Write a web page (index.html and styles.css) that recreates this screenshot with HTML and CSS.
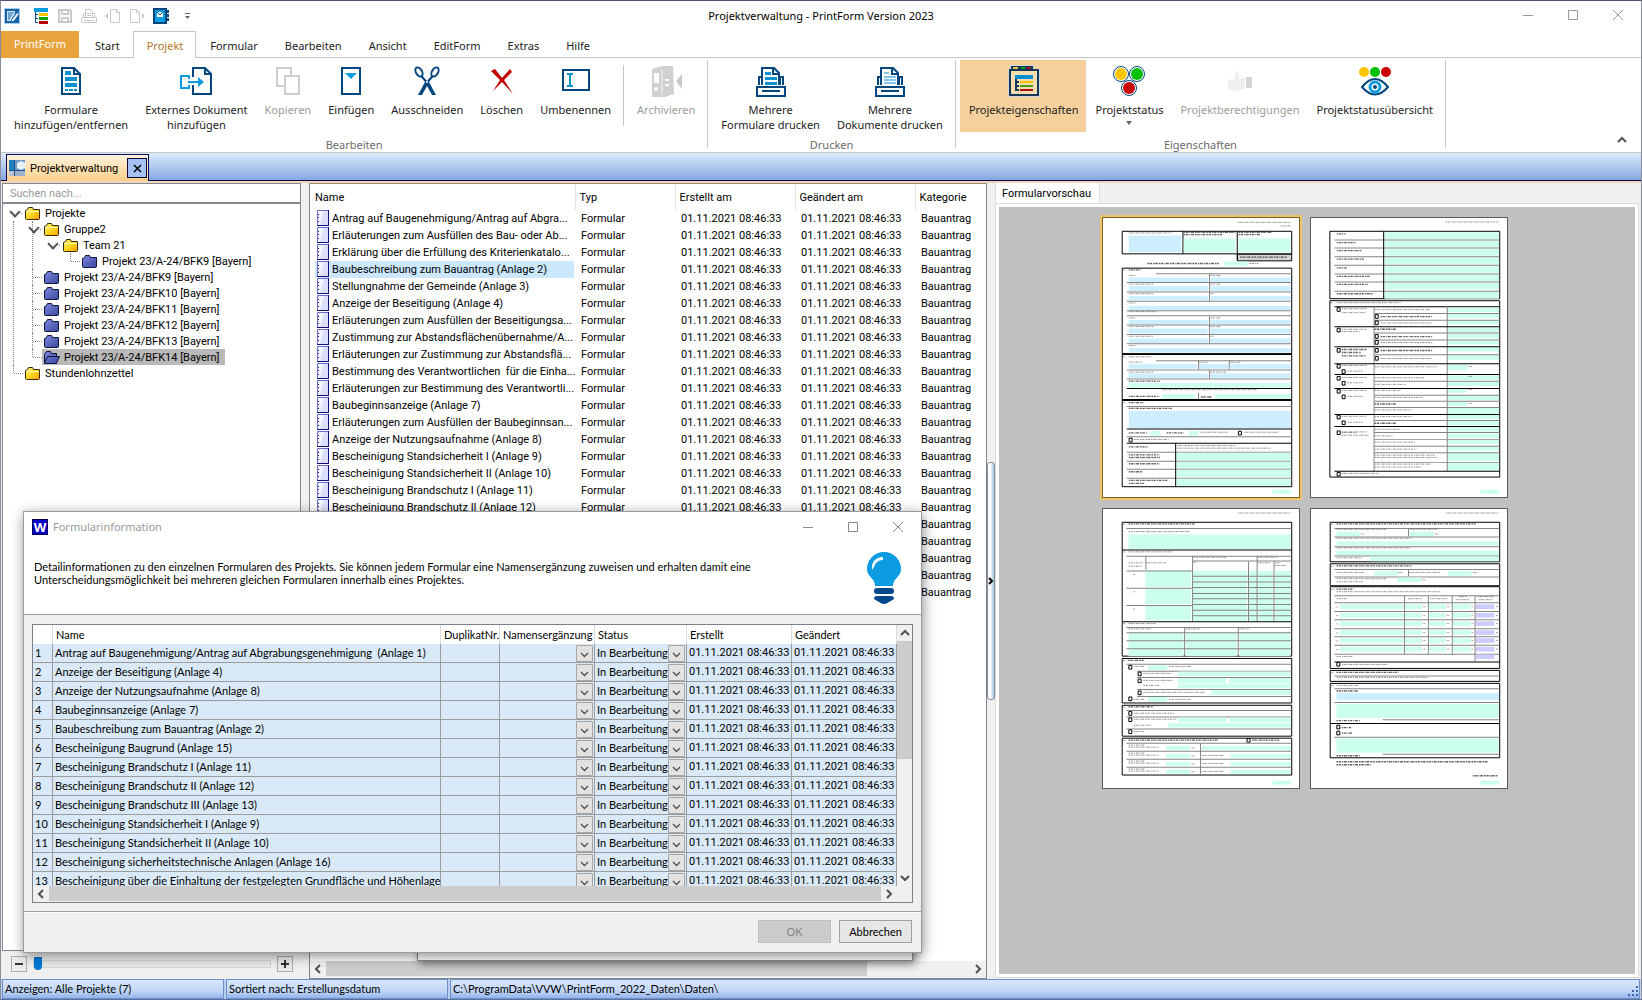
FILE: index.html
```html
<!DOCTYPE html>
<html lang="de">
<head>
<meta charset="utf-8">
<title>Projektverwaltung - PrintForm Version 2023</title>
<link rel="stylesheet" href="styles.css">
</head>
<body>
<div class="window">
  <header class="titlebar">
    <div class="quick">
      <button class="qbtn" aria-label="Bearbeiten"><svg width="16" height="16" viewBox="0 0 16 16"><rect width="16" height="16" fill="#a9cdea"/><rect x="1" y="1" width="14" height="14" fill="#1565a8"/><path d="M3 3h8v3l-3 4-1 3H3z" fill="#cfe4f5"/><path d="M4 5h6M4 7h4M4 9h3M4 11h2" stroke="#1565a8"/><path d="M14 4L8 11l-1 3 3-1 5-7z" fill="#fff" stroke="#1565a8" stroke-width=".7"/></svg></button>
      <button class="qbtn qgap" aria-label="Projektstruktur"><svg width="16" height="16" viewBox="0 0 16 16"><path d="M1 0h14v4H1z" fill="#0a9be0"/><path d="M2.500 4v11M2 6.500h3M2 10.500h3M2 14.500h3" stroke="#0b4a7a" fill="none"/><path d="M6 5h9v3H6z" fill="#f5c400"/><path d="M6 9h9v3H6z" fill="#10a310"/><path d="M6 13h9v3H6z" fill="#b80000"/></svg></button>
      <button class="qbtn" aria-label="Speichern" disabled><svg width="16" height="16" viewBox="0 0 16 16" fill="none" stroke="#c8c8c8" stroke-width="2"><path d="M2 2h11l1 1v11H2z"/><path d="M5 2v4h6V2M5 14v-4h6v4"/></svg></button>
      <button class="qbtn" aria-label="Drucken" disabled><svg width="16" height="16" viewBox="0 0 16 16" fill="none" stroke="#c8c8c8"><path d="M4.500 9V1.500h5l2 2V9M2.500 9V5.500h2M13.500 9V5.500h-2M.5 9.500h15v5H.5zM3 12.500h10M6 5.500h4M6 7.500h4"/></svg></button>
      <button class="qbtn" aria-label="Vorheriges Formular" disabled><svg width="16" height="16" viewBox="0 0 16 16" fill="none" stroke="#c8c8c8"><path d="M5.500 1.500h6l3 3v10h-9zM11.500 1.500v3h3"/><path d="M3 5v6L0 8z" fill="#c8c8c8" stroke="none"/></svg></button>
      <button class="qbtn" aria-label="Nächstes Formular" disabled><svg width="16" height="16" viewBox="0 0 16 16" fill="none" stroke="#c8c8c8"><path d="M1.500 1.500h6l3 3v10h-9zM7.500 1.500v3h3"/><path d="M13 5v6l3-3z" fill="#c8c8c8" stroke="none"/></svg></button>
      <button class="qbtn" aria-label="Adressbuch"><svg width="16" height="16" viewBox="0 0 16 16"><path d="M1 1h12v14H1z" fill="#0a9be0" stroke="#04477f" stroke-width="2"/><path d="M14 2h2v3h-2zM14 6h2v3h-2zM14 10h2v3h-2z" fill="#04477f"/><path d="M4 4h6v5H4z" fill="#fff"/><path d="M4 4l3 3 3-3" fill="none" stroke="#04477f"/></svg></button>
      <button class="qbtn qgap" aria-label="Symbolleiste anpassen"><svg width="16" height="16" viewBox="0 0 16 16"><path d="M3 5h5v1H3zM3 8h5l-2.500 3z" fill="#666"/></svg></button>
    </div>
    <h1 class="title">Projektverwaltung - PrintForm Version 2023</h1>
    <div class="winctl">
      <button aria-label="Minimieren"><svg width="12" height="12" viewBox="0 0 12 12"><path d="M1 6.500h10" stroke="#999"/></svg></button>
      <button aria-label="Maximieren"><svg width="12" height="12" viewBox="0 0 12 12"><path d="M1.500 1.500h9v9h-9z" fill="none" stroke="#999"/></svg></button>
      <button aria-label="Schließen"><svg width="12" height="12" viewBox="0 0 12 12"><path d="M1 1l10 10M11 1L1 11" stroke="#999"/></svg></button>
    </div>
  </header>

  <nav class="tabs">
    <button class="tab app">PrintForm</button>
    <button class="tab">Start</button>
    <button class="tab active">Projekt</button>
    <button class="tab">Formular</button>
    <button class="tab">Bearbeiten</button>
    <button class="tab">Ansicht</button>
    <button class="tab">EditForm</button>
    <button class="tab">Extras</button>
    <button class="tab">Hilfe</button>
  </nav>

  <section class="ribbon">
    <div class="group">
      <div class="items">
        <button class="big"><svg width="32" height="32" viewBox="0 0 32 32"><path d="M7 3h12l6 6v20H7z" fill="#fff" stroke="#04477f" stroke-width="2"/><path d="M19 3v6h6" fill="none" stroke="#04477f" stroke-width="2"/><path d="M10 6h6v4h-6zM10 12h12v4H10zM10 18h12v4H10zM10 24h3v2h-3zM14 24h4v2h-4zM19 24h3v2h-3z" fill="#0a8fd0"/></svg>Formulare<br>hinzufügen/entfernen</button>
        <button class="big"><svg width="32" height="32" viewBox="0 0 32 32" fill="none" stroke-width="2"><path d="M13 12V3h12l6 6v20H13V20" stroke="#04477f"/><path d="M25 3v6h6" stroke="#04477f"/><path d="M9 14v-3H1v12h8v-3M8 17h12" stroke="#0a9be0"/><path d="M18 12l6 5-6 5z" fill="#0a9be0"/></svg>Externes Dokument<br>hinzufügen</button>
        <button class="big" disabled><svg width="32" height="32" viewBox="0 0 32 32" fill="#fff" stroke="#cfcfcf" stroke-width="2"><path d="M5 3h14v18H5z"/><path d="M13 11h14v18H13z"/></svg>Kopieren</button>
        <button class="big"><svg width="32" height="32" viewBox="0 0 32 32"><path d="M7 3h18v26H7z" fill="#fff" stroke="#04477f" stroke-width="2"/><path d="M10 8h12l-6 6z" fill="#0a9be0"/></svg>Einfügen</button>
        <button class="big"><svg width="32" height="32" viewBox="0 0 32 32"><g fill="none" stroke="#04477f" stroke-width="2"><ellipse cx="8" cy="7" rx="3" ry="5" transform="rotate(-30 8 7)"/><ellipse cx="24" cy="7" rx="3" ry="5" transform="rotate(30 24 7)"/></g><path d="M9 11l5 6-7 13h4l5-9 5 9h4l-7-13 5-6-2-1-5 6-5-6z" fill="#04477f"/><circle cx="16" cy="17" r="1" fill="#fff"/></svg>Ausschneiden</button>
        <button class="big"><svg width="32" height="32" viewBox="0 0 32 32" fill="#c00000"><path d="M5 6l4-2 7 9 8-9 2 3-8 8 9 14-11-12-9 9 7-11z"/></svg>Löschen</button>
        <button class="big"><svg width="32" height="32" viewBox="0 0 32 32"><path d="M3 5h26v20H3z" fill="#fff" stroke="#04477f" stroke-width="2"/><path d="M7 9h6M7 21h6M10 9v12" stroke="#0a8fd0" stroke-width="2"/></svg>Umbenennen</button>
        <span class="sep"></span>
        <button class="big" disabled><svg width="32" height="32" viewBox="0 0 32 32"><path d="M2 4l10-3h11l1 28-9 3H2z" fill="#d0d0d0"/><path d="M4 8h5v10H4z" fill="#fff"/><circle cx="6" cy="24" r="2" fill="#fff"/><path d="M12 4v26" stroke="#f4f4f4"/><path d="M15 14h4v2h-4zM15 19h4v2h-4z" fill="#fff"/><path d="M32 9v15l-6-8z" fill="#c8c8c8"/></svg>Archivieren</button>
      </div>
      <div class="label">Bearbeiten</div>
    </div>
    <div class="group">
      <div class="items">
        <button class="big"><svg width="32" height="32" viewBox="0 0 32 32"><path d="M4 20v-8h3v8M28 20v-8h-3v8" fill="#fff" stroke="#04477f" stroke-width="2"/><path d="M7 20V3h12l5 5v12" fill="#fff" stroke="#04477f" stroke-width="2"/><path d="M18 3v6h6" fill="none" stroke="#04477f" stroke-width="2"/><path d="M10 7h6v3h-6zM10 12h12v3H10zM10 17h12v3H10z" fill="#0a8fd0"/><path d="M2 22h28v9H2z" fill="#fff" stroke="#04477f" stroke-width="2"/><path d="M7 26h18" stroke="#04477f" stroke-width="2"/></svg>Mehrere<br>Formulare drucken</button>
        <button class="big"><svg width="32" height="32" viewBox="0 0 32 32"><path d="M4 20v-8h3v8M28 20v-8h-3v8" fill="#fff" stroke="#04477f" stroke-width="2"/><path d="M7 20V3h12l5 5v12" fill="#fff" stroke="#04477f" stroke-width="2"/><path d="M18 3v6h6" fill="none" stroke="#04477f" stroke-width="2"/><path d="M10 8h5M10 12h12M10 15h12M10 18h12" stroke="#0a8fd0"/><path d="M2 22h28v9H2z" fill="#fff" stroke="#04477f" stroke-width="2"/><path d="M7 26h18" stroke="#04477f" stroke-width="2"/></svg>Mehrere<br>Dokumente drucken</button>
      </div>
      <div class="label">Drucken</div>
    </div>
    <div class="group">
      <div class="items">
        <button class="big on"><svg width="32" height="32" viewBox="0 0 32 32"><path d="M0 4h2V0h24v4h6v28H0z" fill="#cfd8dc"/><path d="M2 5h28v25H2z" fill="#f5ddb0" stroke="#14375a" stroke-width="2"/><path d="M3 1h22v5H3z" fill="#14375a"/><path d="M5 2h5v2H5z" fill="#e0c040"/><path d="M13 2h4v2h-4z" fill="#10a310"/><path d="M19 2h4v2h-4z" fill="#a01030"/><path d="M7 10h18v4H7z" fill="#0a8fd0"/><path d="M8 14v12M8 17h3M8 21h3M8 25h3" stroke="#14375a" stroke-width="2"/><path d="M12 16h13v2H12z" fill="#f5c400"/><path d="M12 20h13v2H12z" fill="#40a020"/><path d="M12 24h13v2H12z" fill="#b01010"/></svg>Projekteigenschaften</button>
        <button class="big"><svg width="32" height="32" viewBox="0 0 32 32" stroke="#04477f" stroke-width="1"><g fill="#fff"><circle cx="8" cy="9" r="7.500"/><circle cx="24" cy="9" r="7.500"/><circle cx="16" cy="23" r="7.500"/></g><g stroke="none"><circle cx="8" cy="9" r="6" fill="#ffc400"/><circle cx="24" cy="9" r="6" fill="#00c000"/><circle cx="16" cy="23" r="6" fill="#c80000"/></g></svg>Projektstatus<span class="caret"></span></button>
        <button class="big" disabled><svg width="32" height="32" viewBox="0 0 32 32"><path d="M4 15l6-1 2-8 3 1v7l6-1v11l-13 2-4-3z" fill="#efefef"/><path d="M22 12h6v11h-6z" fill="#d4d4d4"/></svg>Projektberechtigungen</button>
        <button class="big"><svg width="32" height="32" viewBox="0 0 32 32"><circle cx="5" cy="7" r="5" fill="#ffc400"/><circle cx="16" cy="7" r="5" fill="#00c000"/><circle cx="27" cy="7" r="5" fill="#c80000"/><path d="M3 22q13-16 26 0-13 15-26 0z" fill="#fff" stroke="#04477f" stroke-width="2"/><circle cx="16" cy="22" r="5" fill="none" stroke="#0a9be0" stroke-width="3"/><circle cx="16" cy="22" r="2" fill="#04477f"/></svg>Projektstatusübersicht</button>
      </div>
      <div class="label">Eigenschaften</div>
    </div>
    <button class="collapse" aria-label="Menüband reduzieren"><svg width="10" height="8" viewBox="0 0 10 8"><path d="M1 6l4-4 4 4" fill="none" stroke="#555" stroke-width="2"/></svg></button>
  </section>

  <div class="docstrip">
    <div class="doctab">
      <svg width="16" height="16" viewBox="0 0 16 16"><rect width="16" height="16" fill="#1c4f86"/><rect x="6" width="10" height="10" fill="#6f9cc8"/><path d="M8 3l4-2 4 2v5l-4 2-4-2z" fill="#e8f2fb"/><path d="M0 11h5v5H0z" fill="#b8c4d4"/><path d="M6 11h10v5H6z" fill="#9fb0cc"/><path d="M0 0h5v10H0z" fill="#1f7fc0"/></svg>
      <span>Projektverwaltung</span>
      <button class="docclose" aria-label="Tab schließen"><svg width="9" height="9" viewBox="0 0 9 9"><path d="M1 1l7 7M8 1L1 8" stroke="#000" stroke-width="1.500"/></svg></button>
    </div>
  </div>

  <main class="main">
    <aside class="left">
      <input class="search" type="text" placeholder="Suchen nach..." aria-label="Suchen nach">
      <div class="tree">
        <ul class="root">
          <li><div class="node"><i class="open"></i><svg class="fo"><use href="#fy"/></svg><span>Projekte</span></div>
            <ul>
              <li><div class="node"><i class="open"></i><svg class="fo"><use href="#fy"/></svg><span>Gruppe2</span></div>
                <ul class="plain">
                  <li><div class="node"><i class="open"></i><svg class="fo"><use href="#fy"/></svg><span>Team 21</span></div>
                    <ul class="plain"><li class="last"><div class="node"><i></i><svg class="fo"><use href="#fb"/></svg><span>Projekt 23/A-24/BFK9 [Bayern]</span></div></li></ul>
                  </li>
                </ul>
              </li>
            </ul>
            <ul class="flat">
              <li><div class="node"><i></i><svg class="fo"><use href="#fb"/></svg><span>Projekt 23/A-24/BFK9 [Bayern]</span></div></li>
              <li><div class="node"><i></i><svg class="fo"><use href="#fb"/></svg><span>Projekt 23/A-24/BFK10 [Bayern]</span></div></li>
              <li><div class="node"><i></i><svg class="fo"><use href="#fb"/></svg><span>Projekt 23/A-24/BFK11 [Bayern]</span></div></li>
              <li><div class="node"><i></i><svg class="fo"><use href="#fb"/></svg><span>Projekt 23/A-24/BFK12 [Bayern]</span></div></li>
              <li><div class="node"><i></i><svg class="fo"><use href="#fb"/></svg><span>Projekt 23/A-24/BFK13 [Bayern]</span></div></li>
              <li class="last"><div class="node sel"><i></i><svg class="fo"><use href="#fbo"/></svg><span>Projekt 23/A-24/BFK14 [Bayern]</span></div></li>
            </ul>
          </li>
          <li class="last"><div class="node"><i></i><svg class="fo"><use href="#fy"/></svg><span>Stundenlohnzettel</span></div></li>
        </ul>
      </div>
      <div class="zoombar">
        <button aria-label="Verkleinern"><svg width="8" height="8" viewBox="0 0 8 8"><path d="M0 4h8" stroke="#333" stroke-width="2"/></svg></button>
        <input type="range" min="0" max="100" value="0" aria-label="Zoom">
        <button aria-label="Vergrößern"><svg width="8" height="8" viewBox="0 0 8 8"><path d="M0 4h8M4 0v8" stroke="#333" stroke-width="2"/></svg></button>
      </div>
    </aside>

    <section class="list">
      <div class="listbody">
        <table class="files">
          <colgroup><col class="c-name"><col class="c-typ"><col class="c-date"><col class="c-date"><col></colgroup>
          <thead><tr><th>Name</th><th>Typ</th><th>Erstellt am</th><th>Geändert am</th><th>Kategorie</th></tr></thead>
          <tbody id="files"></tbody>
        </table>
      </div>
      <div class="hscroll">
        <svg class="arr"><use href="#al"/></svg><span class="track"><span class="thumb wide"></span></span><svg class="arr"><use href="#ar"/></svg>
      </div>
    </section>

    <div class="splitter"><div class="handle"><svg width="6" height="8" viewBox="0 0 6 8"><path d="M1 1l3 3-3 3" fill="none" stroke="#000" stroke-width="2"/></svg></div></div>

    <section class="preview">
      <div class="ptabs"><button class="ptab">Formularvorschau</button></div>
      <div class="pbody"><div class="pages" id="pages"></div></div>
    </section>
  </main>

  <footer class="status">
    <span class="cell">Anzeigen: Alle Projekte (7)</span>
    <span class="cell">Sortiert nach: Erstellungsdatum</span>
    <span class="cell grow">C:\ProgramData\VVW\PrintForm_2022_Daten\Daten\</span>
    <svg class="grip" width="12" height="12" viewBox="0 0 12 12"><path d="M9 1h2v2H9zM9 5h2v2H9zM9 9h2v2H9zM5 5h2v2H5zM5 9h2v2H5zM1 9h2v2H1z" fill="#3f62a8"/></svg>
  </footer>

  <div class="behind"></div>
  <div class="dialog" role="dialog" aria-label="Formularinformation">
    <div class="dtop">
      <div class="dtitle">
        <span class="wicon">W</span>
        <h2>Formularinformation</h2>
        <div class="winctl small">
          <button aria-label="Minimieren"><svg width="12" height="12" viewBox="0 0 12 12"><path d="M1 6.500h10" stroke="#888"/></svg></button>
          <button aria-label="Maximieren"><svg width="12" height="12" viewBox="0 0 12 12"><path d="M1.500 1.500h9v9h-9z" fill="none" stroke="#888"/></svg></button>
          <button aria-label="Schließen"><svg width="12" height="12" viewBox="0 0 12 12"><path d="M1 1l10 10M11 1L1 11" stroke="#888"/></svg></button>
        </div>
      </div>
      <div class="dinfo">
        <p>Detailinformationen zu den einzelnen Formularen des Projekts. Sie können jedem Formular eine Namensergänzung zuweisen und erhalten damit eine<br>Unterscheidungsmöglichkeit bei mehreren gleichen Formularen innerhalb eines Projektes.</p>
        <svg width="34" height="52" viewBox="0 0 34 52"><path d="M17 0a17 17 0 0 1 17 17c0 8-8 9-8 17H8C8 26 0 25 0 17A17 17 0 0 1 17 0z" fill="#0a9be0"/><path d="M5 18C4 10 9 5 16 5v3c-5 0-8 3-9 7z" fill="#fff"/><path d="M10 36h14q3 0 3 3t-3 3H10q-3 0-3-3t3-3zM10 44h14q3 0 3 3l-5 3q-5 4-10 0l-5-3q0-3 3-3z" fill="#04478a"/></svg>
      </div>
    </div>
    <div class="dbody">
      <div class="grid">
        <div class="gridview">
          <table class="forms">
            <colgroup><col class="g-no"><col><col class="g-dup"><col class="g-ext"><col class="g-st"><col class="g-date"><col class="g-date"></colgroup>
            <thead><tr><th></th><th>Name</th><th>DuplikatNr.</th><th>Namensergänzung</th><th>Status</th><th>Erstellt</th><th>Geändert</th></tr></thead>
            <tbody id="forms"></tbody>
          </table>
        </div>
        <div class="vscroll"><svg class="arr"><use href="#au"/></svg><span class="vthumb"></span><svg class="arr"><use href="#ad"/></svg></div>
        <div class="hscroll inner"><svg class="arr"><use href="#al"/></svg><span class="track"><span class="thumb"></span></span><svg class="arr"><use href="#ar"/></svg></div>
      </div>
    </div>
    <div class="dfoot">
      <button class="btn" disabled>OK</button>
      <button class="btn">Abbrechen</button>
    </div>
  </div>
</div>

<svg class="defs" width="0" height="0">
  <defs>
    <linearGradient id="gy" x1="0" y1="0" x2="1" y2="1"><stop offset="0" stop-color="#fff27a"/><stop offset=".5" stop-color="#ffd820"/><stop offset="1" stop-color="#ff9c00"/></linearGradient>
    <linearGradient id="gb" x1="0" y1="0" x2="1" y2="1"><stop offset="0" stop-color="#7c88dc"/><stop offset="1" stop-color="#3a46a0"/></linearGradient>
  </defs>
  <symbol id="fy" viewBox="0 0 16 13"><path d="M.5 3.500l2-1 1-2h4l1 2h6v9q0 1-1 1h-12q-1 0-1-1z" fill="url(#gy)" stroke="#3a2a00"/><path d="M1 4.500h13" stroke="#fff8b0"/></symbol>
  <symbol id="fb" viewBox="0 0 16 13"><path d="M.5 3.500l2-1 1-2h4l1 2h6v9q0 1-1 1h-12q-1 0-1-1z" fill="url(#gb)" stroke="#10143c"/></symbol>
  <symbol id="fbo" viewBox="0 0 16 13"><path d="M.5 12.500v-9l2-3h4l1 2h5v3h3l-3 7z" fill="url(#gb)" stroke="#10143c"/><path d="M.5 12.500l3-7h12" fill="none" stroke="#10143c"/></symbol>
  <symbol id="al" viewBox="0 0 16 16"><path d="M10 4L6 8l4 4" fill="none" stroke="#505050" stroke-width="2"/></symbol>
  <symbol id="ar" viewBox="0 0 16 16"><path d="M6 4l4 4-4 4" fill="none" stroke="#505050" stroke-width="2"/></symbol>
  <symbol id="au" viewBox="0 0 16 16"><path d="M4 10l4-4 4 4" fill="none" stroke="#505050" stroke-width="2"/></symbol>
  <symbol id="ad" viewBox="0 0 16 16"><path d="M4 6l4 4 4-4" fill="none" stroke="#505050" stroke-width="2"/></symbol>
</svg>
<script src="app.js"></script>
</body>
</html>
```
FILE: styles.css
```css
* { box-sizing: border-box; }
body { margin: 0; font-family: "Noto Sans", "Open Sans", sans-serif; font-size: 11px; color: #222; }
button { font: inherit; color: inherit; background: none; border: 0; padding: 0; margin: 0; }
svg { display: block; flex: none; }
.defs { position: absolute; }

.window { position: relative; display: flex; flex-direction: column; height: 100vh; background: #fff; border: 1px solid #8a8d98; border-top-color: #4a5070; border-bottom-color: #5a6f9a; }

/* title bar */
.titlebar { display: grid; grid-template-columns: 1fr auto 1fr; align-items: center; height: 30px; }
.quick { display: flex; gap: 8px; padding-left: 3px; }
.qgap { margin-left: 5px; }
.title { margin: 0; padding-bottom: 2px; font-size: 11px; font-weight: 400; color: #000; }
.winctl { display: flex; justify-content: flex-end; gap: 33px; padding: 0 17px 2px 0; }

/* ribbon tabs */
.tabs { display: flex; height: 27px; border-bottom: 1px solid #c6c6c6; }
.tab { height: 27px; padding: 0 12px 0 13px; border: 1px solid transparent; border-bottom: 0; }
.tab.app { background: #e8a33d; color: #fff; padding: 0 12px 4px; margin-right: 2px; }
.tab.active { border-color: #c6c6c6; background: #fff; color: #b5762a; }

/* ribbon */
.ribbon { display: flex; height: 95px; padding-top: 2px; border-bottom: 1px solid #c6c6c6; }
.group { display: flex; flex-direction: column; height: 88px; padding: 0 4px; border-right: 1px solid #c6c6c6; }
.items { display: flex; align-items: flex-start; height: 77px; flex: none; }
.big { width: max-content; padding: 5px 8px 0 9px; line-height: 15px; text-align: center; }
.big svg { margin: 0 auto 5px; }
.big:disabled { color: #9c9c9c; }
.big.on { padding-bottom: 15px; background: #f5d09c; }
.caret { display: block; width: 0; margin: 4px auto 0; border: 3px solid transparent; border-top: 4px solid #666; border-bottom: 0; }
.sep { width: 1px; height: 61px; margin: 5px 4px 0; background: #c6c6c6; }
.label { height: 15px; line-height: 15px; text-align: center; color: #6a6a6a; }
.collapse { margin: auto 14px 8px auto; }

/* document tabs */
.docstrip { display: flex; align-items: flex-end; height: 28px; padding-left: 5px; background: linear-gradient(#dcebfc, #85a8e0); border-bottom: 1px solid #0a0a50; }
.doctab { display: flex; align-items: center; gap: 5px; height: 27px; margin-bottom: -1px; padding: 0 1px 0 2px; border: 1px solid #0a0a60; border-bottom: 0; background: linear-gradient(#fff3dc, #fdd08c); font-family: Roboto, sans-serif; color: #000; }
.docclose { display: grid; place-items: center; width: 20px; height: 20px; margin-left: 4px; background: #a6c2f5; border: 1px solid #0a0a40; }

/* work area */
.main { display: flex; flex: 1; min-height: 0; padding: 0 2px 0 1px; background: #f0f0f0; border-top: 2px solid #f3d5bd; font-family: Roboto, sans-serif; color: #000; }
.left { display: flex; flex-direction: column; width: 299px; }
.search { height: 20px; padding: 0 7px; border: 1px solid #828790; font: inherit; background: #fff; }
.search::placeholder { color: #999; opacity: 1; }
.tree { flex: 1; min-height: 0; overflow: hidden; padding: 1px 0 0 1px; border: 1px solid #828790; background: #fff; }
.tree ul { list-style: none; margin: 0; padding: 0 0 0 19px; }
.tree .root { padding-left: 0; }
.tree li { position: relative; }
.tree li::before { content: ""; position: absolute; left: 9px; top: 0; height: 100%; border-left: 1px dotted #888; }
.tree .plain > li::before { display: none; }
.tree li.last::before, .tree .plain > li.last::before { display: block; height: 8px; }
.tree .root > li:first-child::before { top: 16px; height: calc(100% - 16px); }
.node { position: relative; display: flex; align-items: center; height: 16px; width: max-content; padding-right: 5px; }
.node > * { position: relative; }
.node i { width: 19px; height: 16px; padding-left: 10px; background: linear-gradient(90deg, #888 50%, transparent 50%) 10px 8px / 2px 1px repeat-x content-box; }
.node i.open { padding-left: 17px; }
.node i.open::before { content: ""; position: absolute; left: 7px; top: 3px; width: 6px; height: 6px; border: solid #555; border-width: 0 2px 2px 0; transform: rotate(45deg); }
.node .fo { width: 16px; height: 13px; margin: 0 4px 0 2px; }
.node.sel::before { content: ""; position: absolute; left: 19px; right: 0; top: 0; height: 16px; background: #b9b9b9; }
.zoombar { display: flex; align-items: center; gap: 6px; height: 28px; padding: 0 8px 2px 9px; }
.zoombar button { display: grid; place-items: center; width: 16px; height: 16px; border: 1px solid #adadad; background: #ececec; }
.zoombar input { -webkit-appearance: none; appearance: none; flex: 1; min-width: 0; height: 16px; margin: 0; background: none; }
.zoombar input::-webkit-slider-runnable-track { height: 8px; border: 1px solid #d6d6d6; background: #e7eaea; }
.zoombar input::-webkit-slider-thumb { -webkit-appearance: none; width: 8px; height: 13px; margin-top: -4px; border-radius: 0 0 4px 4px; background: #0078d7; }

.list { display: flex; flex-direction: column; width: 678px; margin-left: 8px; background: #fff; border: 1px solid #828790; border-top-color: #a08878; }
.listbody { flex: 1; min-height: 0; overflow: hidden; padding-left: 5px; }
.files { table-layout: fixed; width: 100%; border-collapse: collapse; }
.c-name { width: 260px; } .c-typ { width: 100px; } .c-date { width: 120px; }
.files th { height: 26px; padding: 0 0 0 4px; text-align: left; font-weight: 400; border-right: 1px solid #e4e4e4; }
.files th:first-child { padding-left: 0; }
.files th:last-child { border-right: 0; }
.files td { height: 17px; padding: 0 0 0 6px; line-height: 17px; white-space: pre; overflow: hidden; }
.files td:first-child { padding: 0; }
.fname { display: flex; align-items: center; height: 17px; margin-right: 1px; white-space: pre; }
.fname svg { margin: 0 3px 0 2px; }
.selected .fname { background: #cce8ff; }

.hscroll { display: flex; height: 17px; background: #f0f0f0; }
.arr { width: 16px; height: 16px; }
.track { flex: 1; }
.thumb { display: block; height: 15px; background: #cdcdcd; }
.thumb.wide { width: 84%; }

.splitter { display: flex; flex-direction: column; justify-content: center; width: 8px; }
.handle { display: flex; align-items: center; justify-content: center; height: 238px; border: 1px solid #8c8c98; border-radius: 3px; background: linear-gradient(90deg, #fff 40%, #9cc4dc); }

.preview { display: flex; flex-direction: column; flex: 1; min-width: 0; }
.ptabs { height: 20px; }
.ptab { height: 20px; padding: 0 8px 0 6px; background: #fff; border: solid #dcdcdc; border-width: 0 1px; }
.pbody { flex: 1; min-height: 0; margin-bottom: 1px; padding: 3px; background: #fff; border: 1px solid #dcdcdc; }
.pages { display: grid; grid-template-columns: repeat(2, 198px); gap: 10px; align-content: start; justify-content: center; height: 100%; padding: 10px 24px 0 0; background: #c0c0c0; }
.page { width: 198px; height: 281px; background: #fff; border: 1px solid #5c5c5c; }
.page.current { outline: 2px solid #ecc668; border-color: #7a6020; }
.page svg { width: 100%; height: 100%; }

/* status bar */
.status { position: relative; display: flex; gap: 2px; height: 20px; padding: 0 1px; background: #b6cff3; font-family: Lato, sans-serif; color: #000; }
.cell { width: 222px; padding-left: 2px; line-height: 18px; border: 1px solid #6b90cc; background: linear-gradient(#d8e6fb, #c2d7f7 60%, #93b4ea); }
.cell.grow { flex: 1; }
.grip { position: absolute; right: 2px; bottom: 2px; }

/* dialog */
.behind { position: absolute; left: 416px; top: 900px; width: 496px; height: 60px; background: #fff; border: 1px solid #8a8a8a; box-shadow: 2px 3px 8px rgba(0, 0, 0, .45); }
.dialog { position: absolute; left: 22px; top: 510px; width: 899px; display: flex; flex-direction: column; background: #f0f0f0; border: 1px solid #9a9a9a; box-shadow: 1px 3px 12px rgba(0, 0, 0, .45); font-family: Lato, sans-serif; color: #000; }
.dtop { height: 103px; background: #fff; border-bottom: 1px solid #9c9c9c; }
.dtitle { display: flex; align-items: center; height: 29px; padding: 0 17px 0 8px; font-family: "Noto Sans", sans-serif; }
.dtitle h2 { margin: 0 auto 0 5px; font-size: 11px; font-weight: 400; color: #999; }
.wicon { width: 16px; height: 16px; background: #00c; border: 1px solid #000050; color: #fff; font-weight: 700; font-size: 13px; line-height: 14px; text-align: center; }
.winctl.small { padding: 0; }
.dinfo { display: flex; justify-content: space-between; padding: 11px 20px 0 10px; }
.dinfo p { margin: 8px 0 0; line-height: 13px; }
.dbody { padding: 9px 8px 8px; border-bottom: 1px solid #9c9c9c; }
.grid { display: grid; grid-template-columns: 1fr 15px; grid-template-rows: 261px 16px; height: 279px; border: 1px solid #7c808a; background: #f0f0f0; }
.gridview { overflow: hidden; background: #fff; }
.forms { table-layout: fixed; width: 100%; border-collapse: separate; border-spacing: 0; background: #d9e9f7; }
.g-no { width: 20px; } .g-dup { width: 59px; } .g-ext { width: 95px; } .g-st { width: 92px; } .g-date { width: 105px; }
.forms th { height: 19px; padding: 0 0 0 3px; background: #fff; border-right: 1px solid #dcdcdc; text-align: left; font-weight: 400; white-space: nowrap; }
.forms td { height: 19px; padding: 0 0 0 2px; line-height: 18px; border-right: 1px solid #9c9c9c; border-bottom: 1px solid #9c9c9c; white-space: pre; }
.forms td.num { font-family: Roboto, sans-serif; }
.forms select { -webkit-appearance: none; appearance: none; display: block; width: 100%; height: 18px; padding: 0 18px 0 0; border: 0; border-radius: 0; font: inherit; color: #000; background: url("data:image/svg+xml,%3Csvg xmlns='http://www.w3.org/2000/svg' width='17' height='17'%3E%3Cpath d='M.5.5h16v16H.5z' fill='%23e2e2e2' stroke='%23a6a6a6'/%3E%3Cpath d='M5 8l3.500 3.500L12 8' fill='none' stroke='%23505050' stroke-width='1.300'/%3E%3C/svg%3E") right 1px top 1px no-repeat; }
.vscroll { display: flex; flex-direction: column; }
.vthumb { height: 118px; margin-bottom: auto; background: #cdcdcd; }
.inner { grid-column: 1; height: 16px; }
.dfoot { display: flex; justify-content: flex-end; gap: 8px; padding: 7px 9px 9px; border-top: 1px solid #fff; }
.btn { width: 73px; height: 23px; border: 1px solid #a0a0a0; background: #e6e6e6; }
.btn:disabled { border-color: #bfbfbf; background: #ccc; color: #838383; }
```
FILE: app.js
```js
const DATE = '01.11.2021 08:46:33';

const files = [
  'Antrag auf Baugenehmigung/Antrag auf Abgra...',
  'Erläuterungen zum Ausfüllen des Bau- oder Ab...',
  'Erklärung über die Erfüllung des Kriterienkatalo...',
  'Baubeschreibung zum Bauantrag (Anlage 2)',
  'Stellungnahme der Gemeinde (Anlage 3)',
  'Anzeige der Beseitigung (Anlage 4)',
  'Erläuterungen zum Ausfüllen der Beseitigungsa...',
  'Zustimmung zur Abstandsflächenübernahme/A...',
  'Erläuterungen zur Zustimmung zur Abstandsflä...',
  'Bestimmung des Verantwortlichen  für die Einha...',
  'Erläuterungen zur Bestimmung des Verantwortli...',
  'Baubeginnsanzeige (Anlage 7)',
  'Erläuterungen zum Ausfüllen der Baubeginnsan...',
  'Anzeige der Nutzungsaufnahme (Anlage 8)',
  'Bescheinigung Standsicherheit I (Anlage 9)',
  'Bescheinigung Standsicherheit II (Anlage 10)',
  'Bescheinigung Brandschutz I (Anlage 11)',
  'Bescheinigung Brandschutz II (Anlage 12)',
  'Bescheinigung Brandschutz III (Anlage 13)',
  'Bescheinigung Baugrund (Anlage 15)',
  'Bescheinigung (Anlage 16)',
  'Bescheinigung (Anlage 17)',
  'Bescheinigung (Anlage 18)'
];

const sheet = '<svg width="12" height="17" viewBox="0 0 12 17"><path d="M.5 .5h11v15H.5z" fill="#f4f5ff" stroke="#6a6ad0"/><path d="M7 1h4v14H3z" fill="#dcdffb"/><path d="M11.500 0v16M0 15.500h12" stroke="#10107a"/><path d="M1 4h1v1H1zM1 7h1v1H1zM1 11h1v1H1z" fill="#223"/></svg>';

document.getElementById('files').innerHTML = files.map((name, i) =>
  `<tr${i === 3 ? ' class="selected"' : ''}><td><div class="fname">${sheet}${name}</div></td><td>Formular</td><td>${DATE}</td><td>${DATE}</td><td>Bauantrag</td></tr>`
).join('');

const forms = [
  'Antrag auf Baugenehmigung/Antrag auf Abgrabungsgenehmigung  (Anlage 1)',
  'Anzeige der Beseitigung (Anlage 4)',
  'Anzeige der Nutzungsaufnahme (Anlage 8)',
  'Baubeginnsanzeige (Anlage 7)',
  'Baubeschreibung zum Bauantrag (Anlage 2)',
  'Bescheinigung Baugrund (Anlage 15)',
  'Bescheinigung Brandschutz I (Anlage 11)',
  'Bescheinigung Brandschutz II (Anlage 12)',
  'Bescheinigung Brandschutz III (Anlage 13)',
  'Bescheinigung Standsicherheit I (Anlage 9)',
  'Bescheinigung Standsicherheit II (Anlage 10)',
  'Bescheinigung sicherheitstechnische Anlagen (Anlage 16)',
  'Bescheinigung über die Einhaltung der festgelegten Grundfläche und Höhenlage'
];

document.getElementById('forms').innerHTML = forms.map((name, i) =>
  `<tr><td>${i + 1}</td><td>${name}</td><td></td><td><select aria-label="Namensergänzung ${i + 1}"><option></option></select></td><td><select aria-label="Status ${i + 1}"><option>In Bearbeitung</option></select></td><td class="num">${DATE}</td><td class="num">${DATE}</td></tr>`
).join('');

/* Page previews. Each entry: kind, then x y w h.
   g/b/v = field fills, k = black rule, h = grey rule, t = text line, T = bold text line, c = tick box */
const FILL = { g: '#ccffee', b: '#cceeff', v: '#ccccff', k: '#000', h: '#858585', d: '#d4d4d4' };

function draw(view, spec) {
  const out = spec.trim().split(/\s*;\s*/).filter(Boolean).map(item => {
    const [k, x, y, w, h] = item.split(/\s+/);
    if (k === 't' || k === 'T') {
      return `<path d="M${x} ${y}h${w}" stroke="${k === 'T' ? '#111' : '#444'}" stroke-width="${k === 'T' ? 4 : 3}" stroke-dasharray="5 2 7 3 3 2 9 3" opacity="${k === 'T' ? .65 : .55}"/>`;
    }
    if (k === 'c') return `<path d="M${x} ${y}h9v11h-9z" fill="#fff" stroke="#000" stroke-width="3"/>`;
    if (k === 'F') return `<path d="M${x} ${y}h${w}v${h}h-${w}z" fill="none" stroke="#000" stroke-width="3"/>`;
    return `<path d="M${x} ${y}h${w}v${h}h-${w}z" fill="${FILL[k]}"/>`;
  });
  return `<svg viewBox="${view}" preserveAspectRatio="none" aria-hidden="true">${out.join('')}</svg>`;
}

const rows = (ys, fn) => ys.map(fn).join('');

const person = y => `t 118 ${y + 5} 20;t 364 ${y + 5} 30;b 118 ${y + 11} 238 14;b 364 ${y + 11} 242 14;h 112 ${y + 25} 498 3;t 118 ${y + 31} 76;t 364 ${y + 31} 30;b 118 ${y + 37} 238 15;b 364 ${y + 37} 242 15;h 112 ${y + 53} 498 3;t 118 ${y + 60} 74;t 364 ${y + 60} 10;b 118 ${y + 67} 238 13;b 364 ${y + 67} 242 13;h 112 ${y + 81} 498 3;h 360 ${y} 3 82;t 118 ${y + 88} 22;b 118 ${y + 96} 488 13;`;

const page1 = 't 447 35 160;t 576 46 30;F 98 62 512 68;k 280 62 3 68;k 444 62 3 88;d 447 132 163 18;F 446 131 164 20;t 118 67 128;b 118 75 158 50;T 284 65 156;T 284 72 116;g 284 84 156 41;T 449 65 102;T 449 72 66;g 449 84 157 41;T 454 140 142;T 174 159 216;g 405 153 72 13;t 482 159 28;'
  + 'F 98 173 512 258;t 100 179 8;T 118 178 36;h 200 188 410 3;' + person(190) + 'h 112 300 498 3;t 118 304 86;h 112 315 498 3;' + person(318)
  + 'k 98 429 512 5;F 98 433 512 136;t 100 440 8;t 118 440 70;h 200 450 410 3;t 118 456 42;t 330 456 26;t 424 456 34;b 118 462 206 14;b 330 462 88 14;b 424 462 182 14;h 327 450 3 28;h 420 450 3 28;h 112 478 498 3;t 118 486 76;t 364 486 48;b 118 490 238 14;b 364 490 242 14;h 360 480 3 26;h 112 505 498 3;T 118 513 94;g 118 519 488 14;k 112 534 498 3;t 218 539 286;T 118 559 92;g 218 552 98 14;h 327 548 3 20;T 336 561 34;g 378 552 228 14;'
  + 'k 98 567 512 5;F 98 571 512 260;t 100 578 8;T 118 578 44;h 112 588 498 3;T 118 595 130;b 118 603 488 52;k 112 656 498 3;T 118 669 56;g 184 663 30 14;T 232 669 52;g 300 663 28 14;t 334 667 86;c 449 664;t 466 667 104;h 112 679 498 3;c 119 685;t 134 689 104;k 112 699 498 3;T 118 711 58;t 264 707 176;t 264 715 282;h 112 726 498 3;g 262 729 345 22;T 118 735 92;T 118 743 94;h 112 753 498 3;g 262 756 345 20;T 118 762 92;h 112 777 498 3;g 262 780 345 22;T 118 786 42;h 112 804 498 3;g 262 807 345 22;T 118 812 118;T 118 821 46;k 258 700 3 131;g 552 840 57 12;';

const page2 = 't 440 34 162;F 91 62 513 203;'
  + rows([62, 88, 112, 138, 164, 190, 214, 242], (y, i) => `g 256 ${y + 3} 346 20;T 112 ${y + 8} ${[26, 58, 76, 82, 30, 100, 94, 110][i]};` + (i ? `h 105 ${y - 1} 498 3;` : ''))
  + 'k 252 62 3 203;F 91 271 513 531;t 93 278 8;t 112 277 194;k 105 288 498 3;'
  + rows([292, 311, 330, 352, 371, 390, 411, 436, 496, 515, 614, 632, 652, 671, 690, 710], y => `g 447 ${y} 155 13;`)
  + 'g 447 729 155 24;g 447 760 155 22;g 447 464 58 16;g 447 535 58 13;g 447 555 155 16;g 447 574 58 14;g 447 592 155 20;h 223 288 3 496;h 444 288 3 496;k 105 348 498 3;k 105 408 498 3;k 105 459 498 3;k 105 492 498 3;k 105 534 498 3;k 105 612 498 3;k 105 648 498 3;k 105 783 498 3;'
  + rows([308, 328, 367, 388, 432, 512, 554, 572, 591, 630, 666, 687, 708, 727, 757], y => `h 224 ${y} 380 3;`)
  + rows([298, 470, 503, 523, 541, 562, 600, 620, 658, 678, 697, 718, 736, 743, 763, 772], (y, i) => `t 226 ${y} ${[168, 192, 150, 94, 78, 146, 112, 112, 78, 54, 122, 126, 182, 190, 168, 140][i]};`)
  + rows([357, 582, 640], y => `T 226 ${y} 64;`)
  + rows([313, 332, 373, 391, 415, 439], (y, i) => `c 228 ${y};${i % 2 ? 't' : 'T'} 244 ${y + 6} 156;`)
  + rows([292, 354, 415, 463, 499, 538, 616, 663, 788], (y, i) => `c 113 ${y};${i === 2 ? 'T' : 't'} 127 ${y + 3} ${i === 8 ? 112 : 76};`)
  + rows([479, 514, 555, 633], y => `c 128 ${y};t 144 ${y + 4} 46;`)
  + 't 127 307 72;t 127 364 56;T 127 427 58;T 127 437 72;t 127 668 44;t 127 676 80;t 509 469 12;t 509 499 12;t 509 538 12;t 509 580 12;g 546 840 57 12;';

const page3 = 't 432 37 160;F 83 65 512 403;t 86 71 8;T 102 70 200;h 96 82 498 3;t 102 93 184;g 102 102 490 44;k 83 147 512 3;t 86 154 8;t 102 154 132;h 96 166 498 3;t 298 170 102;t 492 170 60;h 296 180 298 3;t 102 187 44;t 153 187 62;t 102 197 40;t 492 187 38;t 544 187 18;t 544 195 36;t 298 185 10;g 153 211 138 48;g 153 263 138 48;g 153 315 138 46;g 297 211 163 152;g 464 211 26 152;g 494 211 44 152;g 545 211 46 152;'
  + rows([226, 243, 260, 278, 294, 311, 328, 345], y => `h 296 ${y} 298 3;`)
  + rows([222, 274, 326], y => `t 117 ${y} 5;h 96 ${y - 12} 200 3;`)
  + 'h 294 166 3 197;h 489 166 3 197;h 540 182 3 181;h 153 166 3 42;h 463 182 3 181;k 83 363 512 3;t 86 370 8;t 102 370 82;h 96 380 498 3;t 102 386 70;t 275 386 44;t 437 386 28;'
  + rows([398, 422, 446], y => `g 102 ${y} 166 22;g 275 ${y} 154 22;g 437 ${y} 154 22;h 96 ${y - 2} 498 3;`)
  + 'h 270 382 3 86;h 432 382 3 86;F 83 475 512 134;t 86 482 8;T 100 481 50;h 96 491 498 3;c 103 496;t 118 499 34;g 162 496 57 14;t 225 499 66;h 128 512 466 3;c 131 516;t 147 520 82;g 252 514 340 14;h 128 531 466 3;c 131 537;t 147 541 90;g 252 534 144 15;g 405 534 187 15;t 147 556 50;g 252 551 340 14;h 128 567 466 3;c 131 573;t 147 577 184;g 352 570 240 15;h 128 588 466 3;c 103 591;t 118 598 34;g 162 591 57 14;t 225 598 66;'
  + 'F 83 616 512 93;t 86 622 8;T 102 621 74;h 96 630 498 3;c 103 635;t 118 640 122;h 96 650 498 3;c 103 654;t 118 658 128;g 252 653 144 13;g 405 653 187 13;t 118 676 54;g 222 669 370 14;h 96 686 498 3;c 103 690;t 118 695 30;F 83 715 512 111;t 86 722 8;T 102 721 272;c 460 716;T 475 721 84;h 96 729 498 3;'
  + rows([736, 760, 784, 808], (y, i) => `t 102 ${y} 50;t 102 ${y + 6} 92;g 216 ${y + 2} 72 12;t 292 ${y + 8} 10;` + (i ? `t 324 ${y + 7} 66;g 411 ${y + 2} 181 12;h 96 ${y - 7} 498 3;` : `g 324 ${y + 2} 268 12;`))
  + 'h 318 730 3 96;g 537 843 57 12;';

const page4 = 't 1056 37 160;F 707 65 512 119;t 710 71 8;T 726 70 420;h 720 82 498 3;t 726 86 152;t 948 86 82;g 726 93 70 14;t 800 100 10;g 948 93 72 14;t 1024 100 10;h 942 82 3 26;h 720 108 498 3;t 726 113 228;g 726 122 490 13;h 720 137 498 3;t 726 142 226;g 726 151 490 14;h 720 165 498 3;t 726 172 76;g 828 168 388 14;F 707 190 512 66;t 710 197 8;T 726 196 228;h 720 206 498 3;t 726 216 84;g 840 212 72 13;t 914 216 12;h 942 208 3 20;t 945 216 94;g 1062 212 72 14;t 1138 216 12;h 720 228 498 3;t 726 235 150;t 726 244 80;g 909 231 72 14;t 984 238 10;'
  + 'F 707 259 512 246;t 710 267 10;T 726 266 52;t 726 274 314;h 720 285 498 3;t 726 295 32;t 942 295 42;t 1008 295 56;t 1096 289 24;t 1086 298 42;t 1152 289 50;t 1156 298 42;'
  + rows([312, 338, 363, 390, 414, 440], y => `h 720 ${y - 6} 498 3;t 726 ${y + 8} 5;g 736 ${y} 193 14;g 934 ${y} 50 14;t 988 ${y + 7} 8;g 1006 ${y} 50 14;t 1060 ${y + 7} 8;g 1078 ${y} 54 14;t 1134 ${y + 7} 4;v 1146 ${y} 57 14;t 1208 ${y + 7} 5;`)
  + 'h 720 461 498 3;t 726 469 50;v 1146 463 57 14;h 930 286 3 176;h 1002 286 3 176;h 1074 286 3 176;h 1143 286 3 198;k 720 484 498 3;c 727 487;t 742 493 138;F 707 511 512 33;t 710 518 8;T 726 517 188;h 720 526 498 3;t 726 532 276;F 707 550 512 224;t 710 557 8;t 726 556 66;h 720 565 498 3;T 726 573 64;b 726 579 490 22;h 720 606 498 3;g 726 611 490 43;h 866 658 352 3;T 726 662 70;k 707 669 512 3;c 727 676;T 742 683 28;c 727 694;T 742 700 34;h 720 711 498 3;g 726 716 490 43;h 866 762 352 3;T 726 768 70;T 726 786 456;T 726 795 104;T 1138 828 76;g 1161 843 57 12;';

document.getElementById('pages').innerHTML = [
  ['40 22 592 840', page1, 'page current'],
  ['34 22 592 840', page2, 'page'],
  ['25 25 592 840', page3, 'page'],
  ['649 25 592 840', page4, 'page']
].map(([view, spec, cls]) => `<div class="${cls}">${draw(view, spec)}</div>`).join('');
```
